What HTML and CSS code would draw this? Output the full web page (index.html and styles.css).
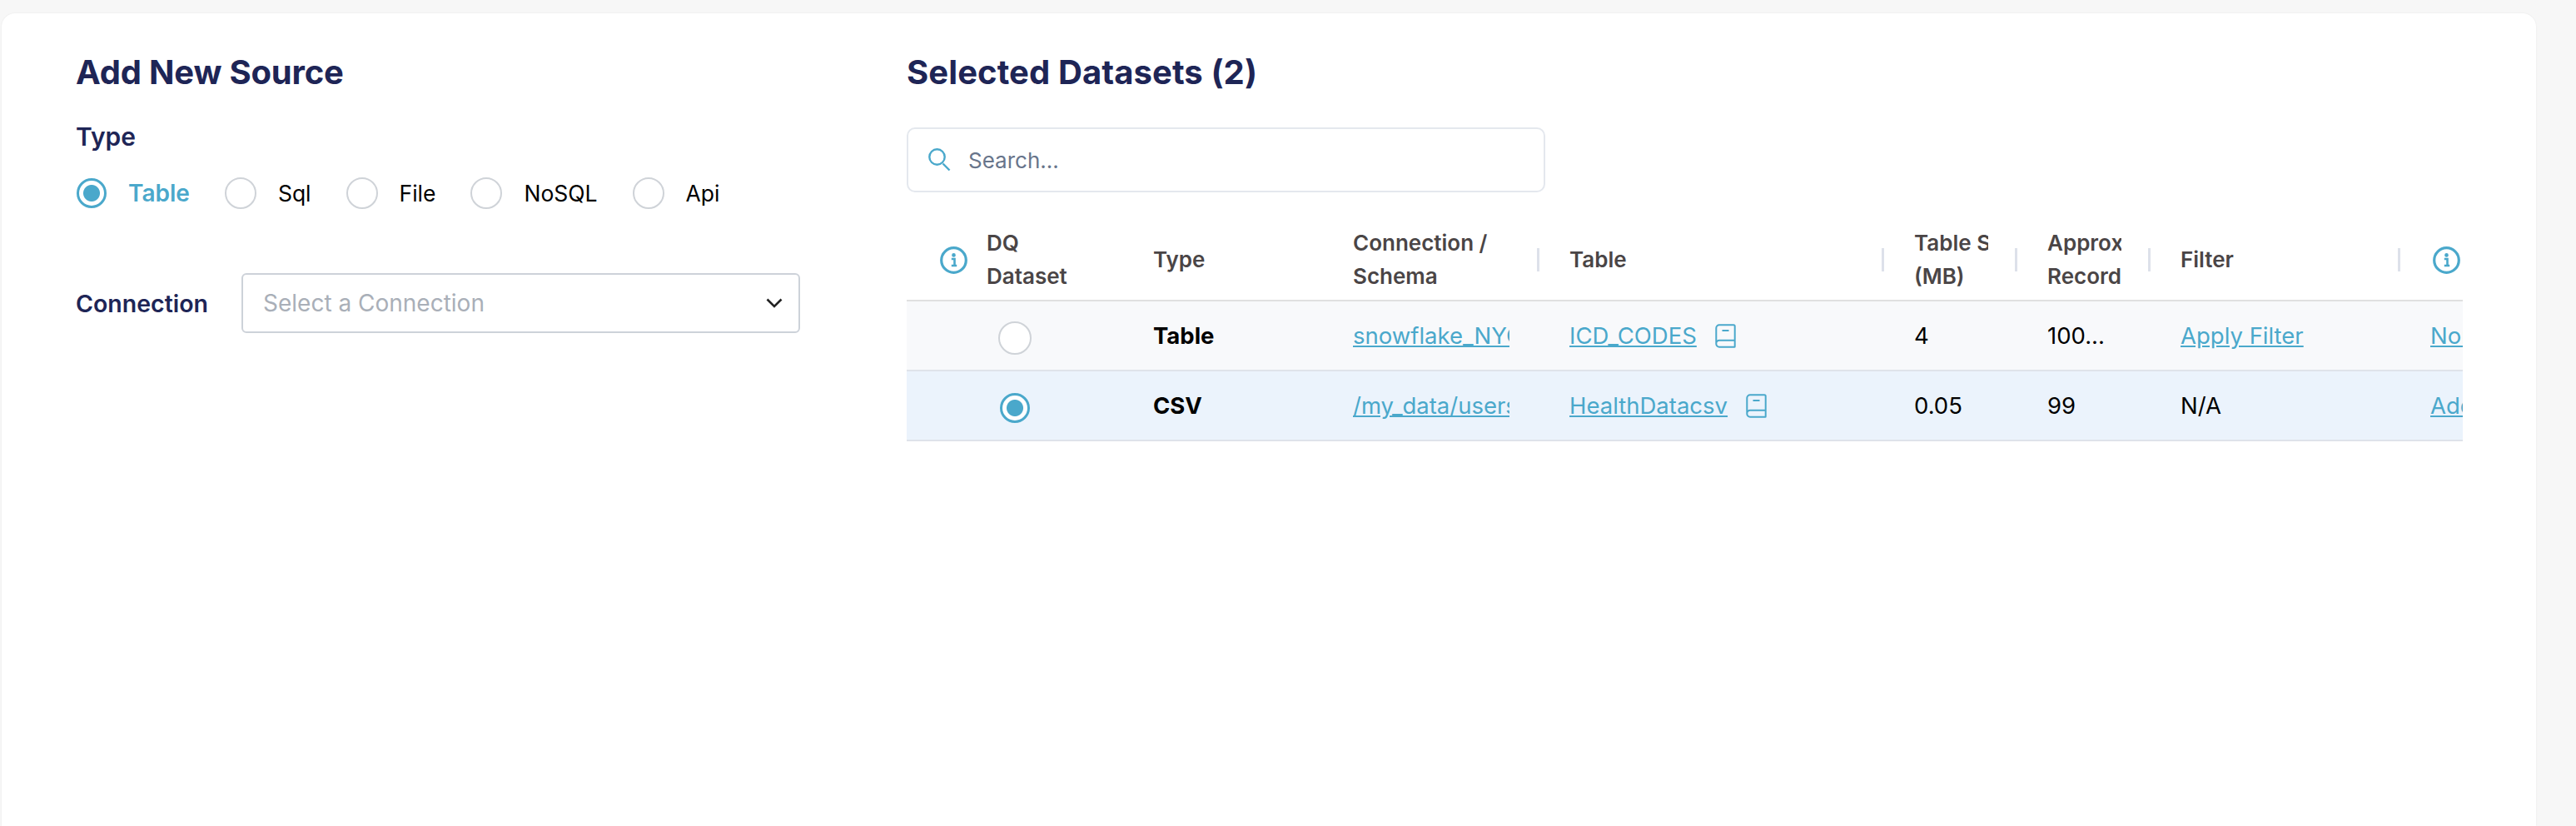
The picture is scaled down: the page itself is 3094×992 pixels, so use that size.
FILE: index.html
```html
<!DOCTYPE html>
<html lang="en">

<head>
    <meta charset="utf-8">
    <title>Add New Source</title>
    <link rel="stylesheet" href="styles.css">
</head>

<body>
    <svg class="icon-defs" width="0" height="0">
        <symbol id="icon-info" viewBox="0 0 33 33">
            <circle cx="16.5" cy="16.5" r="14.8" fill="none" stroke="currentColor" stroke-width="3.2"></circle>
            <circle cx="16.5" cy="10.4" r="2.3" fill="currentColor"></circle>
            <path d="M13.8 15h3.7v7.4M13.8 23h6.4" fill="none" stroke="currentColor" stroke-width="2.6"></path>
        </symbol>
        <symbol id="icon-book" viewBox="0 0 25 29">
            <path d="M1.3 23.5V5a3.7 3.7 0 0 1 3.7-3.7h17.2a1.5 1.5 0 0 1 1.5 1.5v24.4a.5.5 0 0 1-.5.5H5a3.7 3.7 0 0 1-3.7-3.7v-.5a3.7 3.7 0 0 1 3.7-3.7h18.7M8.5 8h8" fill="none" stroke="currentColor" stroke-width="2"></path>
        </symbol>
    </svg>

    <div class="card">
        <section class="source">
            <h2>Add New Source</h2>
            <h3>Type</h3>
            <div class="type-row">
                <span class="radio radio-on"></span>
                <span class="type-label type-label-on">Table</span>
                <span class="radio"></span>
                <span class="type-label">Sql</span>
                <span class="radio"></span>
                <span class="type-label">File</span>
                <span class="radio"></span>
                <span class="type-label">NoSQL</span>
                <span class="radio"></span>
                <span class="type-label">Api</span>
            </div>
            <div class="connection-row">
                <span class="connection-label">Connection</span>
                <div class="select">
                    <span>Select a Connection</span>
                    <svg width="20" height="12" viewBox="0 0 20 12">
                        <path d="M1.5 1.5l8.5 8.5 8.5-8.5" fill="none" stroke="#222" stroke-width="2.6"></path>
                    </svg>
                </div>
            </div>
        </section>

        <section class="datasets">
            <h2>Selected Datasets (2)</h2>
            <div class="search">
                <svg width="27" height="28" viewBox="0 0 27 28">
                    <circle cx="10.5" cy="10.5" r="9.2" fill="none" stroke="currentColor" stroke-width="2.4"></circle>
                    <path d="M17.5 18.5l8 8" fill="none" stroke="currentColor" stroke-width="2.4"></path>
                </svg>
                <span>Search...</span>
            </div>

            <div class="grid-wrap">
                <div class="row row-head">
                    <div class="cell"><svg class="info"><use href="#icon-info"></use></svg></div>
                    <div class="cell">DQ<br>Dataset</div>
                    <div class="cell">Type</div>
                    <div class="cell">
                        <span class="head-text head-wide">Connection /<br>Schema</span>
                        <i class="sep"></i>
                    </div>
                    <div class="cell">
                        <span class="head-text">Table</span>
                        <i class="sep"></i>
                    </div>
                    <div class="cell">
                        <span class="head-text head-clip">Table Size<br>(MB)</span>
                        <i class="sep"></i>
                    </div>
                    <div class="cell">
                        <span class="head-text head-clip">Approx<br>Records</span>
                        <i class="sep"></i>
                    </div>
                    <div class="cell">
                        <span class="head-text">Filter</span>
                        <i class="sep"></i>
                    </div>
                    <div class="cell"><svg class="info"><use href="#icon-info"></use></svg></div>
                </div>

                <div class="row row-one">
                    <div class="cell"></div>
                    <div class="cell"><span class="radio radio-big"></span></div>
                    <div class="cell cell-bold">Table</div>
                    <div class="cell cell-clip"><a href="#">snowflake_NYC_TAXI</a></div>
                    <div class="cell"><a href="#">ICD_CODES</a><svg class="book"><use href="#icon-book"></use></svg></div>
                    <div class="cell">4</div>
                    <div class="cell">100...</div>
                    <div class="cell"><a href="#">Apply Filter</a></div>
                    <div class="cell cell-clip"><a href="#">None</a></div>
                </div>

                <div class="row row-two">
                    <div class="cell"></div>
                    <div class="cell"><span class="radio radio-big radio-on"></span></div>
                    <div class="cell cell-bold">CSV</div>
                    <div class="cell cell-clip"><a href="#">/my_data/users/files</a></div>
                    <div class="cell"><a href="#">HealthDatacsv</a><svg class="book"><use href="#icon-book"></use></svg></div>
                    <div class="cell">0.05</div>
                    <div class="cell">99</div>
                    <div class="cell">N/A</div>
                    <div class="cell cell-clip"><a href="#">Add</a></div>
                </div>
            </div>
        </section>
    </div>
</body>

</html>
```

FILE: styles.css
```css
* {
    box-sizing: border-box;
}

html,
body {
    height: 100%;
}

body {
    margin: 0;
    padding: 16px 48px 0 2px;
    overflow: hidden;
    background-color: #f7f7f7;
    font-family: "Inter", "Liberation Sans", sans-serif;
    font-size: 27px;
    color: #000000;
}

.icon-defs {
    display: block;
}

.card {
    display: flex;
    height: 100%;
    padding: 47px 0 0 89px;
    background-color: #ffffff;
    border-radius: 16px 16px 0 0;
    box-shadow: 0 0 2px rgba(0, 0, 0, 0.08);
}

h2 {
    margin: 0;
    font-size: 40px;
    line-height: 48px;
    font-weight: 700;
    letter-spacing: -0.2px;
    color: #1e2556;
}

.datasets h2 {
    letter-spacing: 0.1px;
}

h3 {
    margin: 34px 0 0;
    font-size: 30px;
    line-height: 38px;
    font-weight: 600;
    color: #1e2556;
}

.source {
    width: 870px;
    margin-right: 128px;
}

.type-row {
    display: flex;
    align-items: center;
    height: 40px;
    margin-top: 29px;
}

.radio {
    flex: none;
    display: block;
    width: 38px;
    height: 38px;
    background-color: #ffffff;
    border: 2px solid #cfd3d8;
    border-radius: 50%;
}

.radio-on {
    width: 36px;
    height: 36px;
    margin-left: 1px;
    border: 3px solid #4aa8cb;
    background: radial-gradient(circle, #4aa8cb 0 9.5px, #ffffff 10.5px);
}

.radio-big {
    width: 40px;
    height: 40px;
    margin: 6px 0 0 14px;
}

.radio-big.radio-on {
    width: 36px;
    height: 36px;
    margin-left: 16px;
}

.type-label {
    margin: 0 42px 0 26px;
    font-size: 26.5px;
}

.type-label-on {
    font-size: 28px;
    font-weight: 600;
    color: #4aa8cb;
}

.connection-row {
    display: flex;
    align-items: center;
    margin-top: 76px;
}

.connection-label {
    width: 199px;
    font-size: 28.5px;
    font-weight: 600;
    color: #1e2556;
}

.select {
    flex: 1;
    display: flex;
    align-items: center;
    justify-content: space-between;
    height: 72px;
    padding: 0 19px 0 24px;
    border: 2px solid #cdd2d9;
    border-radius: 6px;
    font-size: 28px;
    color: #a9afb8;
}

.datasets {
    width: 1869px;
}

.search {
    display: flex;
    align-items: center;
    gap: 21px;
    width: 767px;
    height: 78px;
    margin-top: 42px;
    padding: 0 24px;
    border: 2px solid #e4e8ee;
    border-radius: 10px;
    font-size: 26px;
    color: #4aa8cb;
}

.search span {
    color: #68758b;
}

.grid-wrap {
    margin-top: 33px;
    overflow: hidden;
}

.row {
    display: grid;
    grid-template-columns: 96px 200px 240px 260px 414px 160px 160px 300px 39px;
    align-items: center;
    height: 84px;
    border-bottom: 2px solid #dfe3ea;
    font-size: 27.5px;
}

.row-head {
    height: 98px;
    border-bottom-color: #e0e0e0;
    font-size: 26px;
    line-height: 40px;
    font-weight: 600;
    color: #4a4546;
}

.row-one {
    background-color: #f8f9fb;
}

.row-two {
    background-color: #ebf3fc;
}

.cell {
    display: flex;
    align-items: center;
    min-width: 0;
}

.row-head .cell {
    display: block;
}

.row-head .cell:has(.sep) {
    display: flex;
    justify-content: space-between;
}

.cell-bold {
    font-weight: 700;
}

.cell-clip {
    overflow: hidden;
    white-space: nowrap;
}

.cell-clip a {
    display: block;
    width: 188px;
    overflow: hidden;
}

.head-text {
    white-space: nowrap;
}

.head-clip {
    width: 89px;
    overflow: hidden;
}

.sep {
    flex: none;
    width: 3px;
    height: 28px;
    margin-right: 36px;
    background-color: #dde1ea;
}

.info {
    display: block;
    width: 33px;
    height: 33px;
    color: #4aa8cb;
}

.row-head .cell:first-child .info {
    margin-left: 40px;
}

.row-head .cell:last-child .info {
    margin-left: 3px;
}

a {
    color: #4aa8cb;
    text-decoration: underline;
}

.book {
    flex: none;
    width: 25px;
    height: 29px;
    margin-left: 22px;
    color: #4aa8cb;
}
```
